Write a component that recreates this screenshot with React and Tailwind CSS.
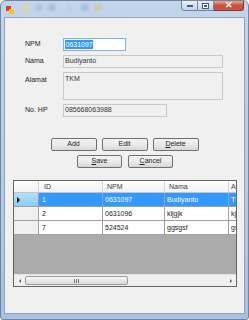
import React from "react";

const font = { fontFamily: '"Liberation Sans", Arial, sans-serif' };

function TextBox({ className = "", children }) {
  return (
    <div
      className={`border border-[#c9c9c9] bg-[#f0f0f0] text-[7px] leading-[10px] pl-[1px] text-[#333] ${className}`}
    >
      {children}
    </div>
  );
}

function Btn({ className = "", children }) {
  return (
    <div
      className={`h-[13px] flex items-center justify-center rounded-[2px] border border-[#707070] bg-gradient-to-b from-[#f2f2f2] via-[#ebebeb] to-[#d6d6d6] text-[7px] text-[#222] ${className}`}
    >
      {children}
    </div>
  );
}

const rows = [
  { id: "1", npm: "0631097", nama: "Budiyanto", a: "TKM", selected: true },
  { id: "2", npm: "0631096", nama: "kljgjk", a: "kjkj" },
  { id: "7", npm: "524524", nama: "ggsgsf", a: "gsgs" },
];

export default function App() {
  return (
    <div
      style={font}
      className="w-[249px] h-[320px] rounded-t-[6px] rounded-b-[3px] bg-gradient-to-b from-[#c3d5ea] via-[#b9cde5] to-[#a9c1df] border border-[#6d84a3] overflow-hidden"
    >
      {/* TITLE BAR */}
      <div className="h-[16px] flex items-start">
        <div className="ml-[5px] mt-[5px] w-[8px] h-[8px] relative">
          <div className="w-[5px] h-[5px] bg-[#d83c2c]" />
          <div className="w-[5px] h-[5px] bg-[#f5c020] ml-[3px] -mt-[2px]" />
        </div>
        <div className="ml-[8px] mt-[3px] flex gap-[5px] opacity-60 blur-[1px]">
          <div className="w-[8px] h-[7px] rounded-sm bg-[#e6d890]" />
          <div className="w-[8px] h-[7px] rounded-sm bg-[#a9b8d9]" />
          <div className="w-[8px] h-[7px] rounded-sm bg-[#9fb0d6]" />
          <div className="w-[5px] h-[7px] ml-[6px] rounded-sm bg-[#b8c9e2]" />
          <div className="w-[8px] h-[7px] ml-[4px] rounded-sm bg-[#8fb3de]" />
          <div className="w-[8px] h-[7px] rounded-sm bg-[#d4c48a]" />
        </div>
        <div className="ml-auto mr-[4px] flex h-[11px] -mt-[1px]">
          <div className="w-[17px] h-full border border-[#6d84a3] rounded-bl-[3px] bg-gradient-to-b from-[#e8eff8] to-[#c3d3e8] flex items-end justify-center pb-[3px]">
            <div className="w-[6px] h-[2px] bg-white border border-[#4a5a70]" />
          </div>
          <div className="w-[16px] h-full border-y border-r border-[#6d84a3] bg-gradient-to-b from-[#e8eff8] to-[#c3d3e8] flex items-center justify-center">
            <div className="w-[7px] h-[6px] border border-[#4a5a70] bg-white flex items-center justify-center">
              <div className="w-[3px] h-[2px] border border-[#4a5a70]" />
            </div>
          </div>
          <div className="w-[30px] h-full border-y border-r border-[#7a3a30] rounded-br-[3px] bg-gradient-to-b from-[#e9a58f] via-[#cf4e3c] to-[#c8553f] flex items-center justify-center text-white text-[9px] font-bold leading-none">
            ✕
          </div>
        </div>
      </div>

      {/* CLIENT AREA */}
      <div className="ml-[3px] w-[241px] h-[297px] bg-[#f0f0f0] border border-[#8ea3bd] relative">
        {/* FORM */}
        <div className="pt-[20px] pl-[20px] grid grid-cols-[38px_auto] gap-y-[4px] text-[7px] text-[#222] items-start">
          <div className="leading-[12px]">NPM</div>
          <div className="w-[63px] h-[13px] border border-[#7eb4ea] bg-white flex items-center pl-[1px]">
            <span className="bg-[#3399ff] text-white leading-[9px] px-[0.5px]">0631097</span>
          </div>

          <div className="leading-[12px]">Nama</div>
          <TextBox className="w-[160px] h-[13px]">Budiyanto</TextBox>

          <div className="leading-[12px] pt-[2px]">Alamat</div>
          <TextBox className="w-[160px] h-[28px] pt-[1px]">TKM</TextBox>

          <div className="leading-[12px]">No. HP</div>
          <TextBox className="w-[104px] h-[13px]">085668063988</TextBox>
        </div>

        {/* BUTTONS */}
        <div className="mt-[21px] flex flex-col items-center gap-[4px]">
          <div className="flex gap-[5px]">
            <Btn className="w-[46px]">Add</Btn>
            <Btn className="w-[46px]">Edit</Btn>
            <Btn className="w-[46px]">
              <span className="underline">D</span>elete
            </Btn>
          </div>
          <div className="flex gap-[6px] ml-[1px]">
            <Btn className="w-[45px]">
              <span className="underline">S</span>ave
            </Btn>
            <Btn className="w-[45px]">
              <span className="underline">C</span>ancel
            </Btn>
          </div>
        </div>

        {/* DATA GRID */}
        <div className="mt-[12px] ml-[8px] w-[224px] h-[107px] border border-[#646464] bg-[#ababab] flex flex-col text-[7px] overflow-hidden">
          <div className="flex h-[12px] bg-gradient-to-b from-white to-[#f2f2f2] text-[#3a3a3a] leading-[11px] border-b border-[#c5c5c5]">
            <div className="w-[25px] shrink-0 border-r border-[#d5d5d5]" />
            <div className="w-[64px] shrink-0 border-r border-[#d5d5d5] pl-[5px]">ID</div>
            <div className="w-[62px] shrink-0 border-r border-[#d5d5d5] pl-[4px]">NPM</div>
            <div className="w-[64px] shrink-0 border-r border-[#d5d5d5] pl-[4px]">Nama</div>
            <div className="pl-[2px]">A</div>
          </div>
          {rows.map((r) => (
            <div
              key={r.id}
              className={`flex h-[14px] leading-[13px] ${r.selected ? "bg-[#3399ff] text-white" : "bg-white text-[#222]"}`}
            >
              <div
                className={`w-[25px] shrink-0 border-r border-b border-[#a0a0a0] flex items-center pl-[3px] ${r.selected ? "bg-gradient-to-b from-[#b6e0fa] to-[#8ecbf3]" : "bg-[#f0f0f0]"}`}
              >
                {r.selected && (
                  <div className="w-0 h-0 border-y-[3px] border-y-transparent border-l-[3px] border-l-black" />
                )}
              </div>
              <div className="w-[64px] shrink-0 border-r border-b border-[#a0a0a0] pl-[3px]">{r.id}</div>
              <div className="w-[62px] shrink-0 border-r border-b border-[#a0a0a0] pl-[2px]">{r.npm}</div>
              <div className="w-[64px] shrink-0 border-r border-b border-[#a0a0a0] pl-[2px]">{r.nama}</div>
              <div className="flex-1 border-b border-[#a0a0a0] pl-[2px] overflow-hidden whitespace-nowrap">{r.a}</div>
            </div>
          ))}
          <div className="flex-1" />
          {/* horizontal scrollbar */}
          <div className="h-[12px] flex bg-[#f0f0f0] border-t border-[#e0e0e0]">
            <div className="w-[11px] flex items-center justify-center">
              <div className="w-0 h-0 border-y-[2px] border-y-transparent border-r-[2px] border-r-[#555]" />
            </div>
            <div className="w-[103px] my-[1px] rounded-[2px] border border-[#9a9a9a] bg-gradient-to-b from-[#f6f6f6] to-[#dcdcdc] flex items-center justify-center">
              <div className="flex gap-[1px]">
                <div className="w-[1px] h-[4px] bg-[#777]" />
                <div className="w-[1px] h-[4px] bg-[#777]" />
                <div className="w-[1px] h-[4px] bg-[#777]" />
              </div>
            </div>
            <div className="flex-1" />
            <div className="w-[11px] flex items-center justify-center">
              <div className="w-0 h-0 border-y-[2px] border-y-transparent border-l-[2px] border-l-[#555]" />
            </div>
          </div>
        </div>
      </div>
    </div>
  );
}
